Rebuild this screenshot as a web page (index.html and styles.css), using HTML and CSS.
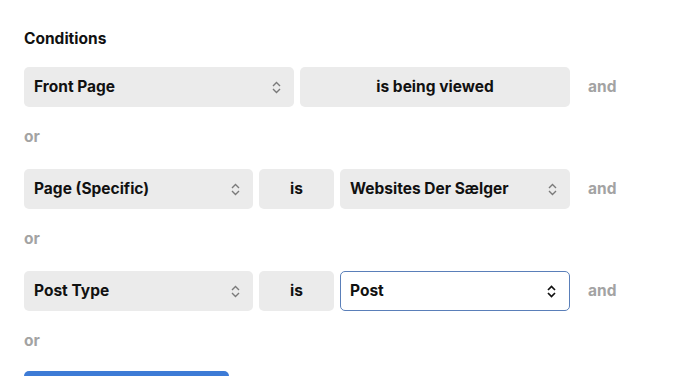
FILE: index.html
```html
<!DOCTYPE html>
<html>
  <head>
    <meta charset="UTF-8" />
    <title>Conditions</title>
    <link rel="stylesheet" href="styles.css">
  </head>
  <body>
    <div class="panel">
      <h3 class="heading">Conditions</h3>

      <div class="rule">
        <div class="fields">
          <div class="field select w-half">
            <span>Front Page</span>
            <svg class="chev" width="9" height="13" viewBox="0 0 9 13"><path d="M1 5 L4.5 1.5 L8 5 M1 8 L4.5 11.5 L8 8" /></svg>
          </div>
          <div class="field static w-half">is being viewed</div>
        </div>
        <span class="join">and</span>
      </div>
      <div class="or">or</div>

      <div class="rule">
        <div class="fields">
          <div class="field select w-left">
            <span>Page (Specific)</span>
            <svg class="chev" width="9" height="13" viewBox="0 0 9 13"><path d="M1 5 L4.5 1.5 L8 5 M1 8 L4.5 11.5 L8 8" /></svg>
          </div>
          <div class="field static w-op">is</div>
          <div class="field select w-right">
            <span>Websites Der Sælger</span>
            <svg class="chev" width="9" height="13" viewBox="0 0 9 13"><path d="M1 5 L4.5 1.5 L8 5 M1 8 L4.5 11.5 L8 8" /></svg>
          </div>
        </div>
        <span class="join">and</span>
      </div>
      <div class="or">or</div>

      <div class="rule">
        <div class="fields">
          <div class="field select w-left">
            <span>Post Type</span>
            <svg class="chev" width="9" height="13" viewBox="0 0 9 13"><path d="M1 5 L4.5 1.5 L8 5 M1 8 L4.5 11.5 L8 8" /></svg>
          </div>
          <div class="field static w-op">is</div>
          <div class="field select w-right active">
            <span>Post</span>
            <svg class="chev" width="9" height="13" viewBox="0 0 9 13"><path d="M1 5 L4.5 1.5 L8 5 M1 8 L4.5 11.5 L8 8" /></svg>
          </div>
        </div>
        <span class="join">and</span>
      </div>
      <div class="or">or</div>

      <!-- only the top edge of this button is in view -->
      <button class="add-btn" aria-label="Add rule group"></button>
    </div>
  </body>
</html>
```

FILE: styles.css
```css
body {
    margin: 0;
    background: #fff;
    font-family: Inter, "Liberation Sans", sans-serif;
    color: #111;
    overflow: hidden;
}
.panel { padding: 29px 24px 0 24px; }
.heading {
    margin: 0 0 18px 0;
    font-size: 15.5px;
    line-height: 20px;
    font-weight: 700;
}
.rule {
    display: flex;
    align-items: center;
}
.fields {
    display: flex;
    gap: 6px;
    width: 546px;
}
.field {
    height: 40px;
    box-sizing: border-box;
    border-radius: 5px;
    background: #ebebeb;
    display: flex;
    align-items: center;
    padding-bottom: 2px;
    font-size: 15.5px;
    font-weight: 700;
    color: #111;
}
.select {
    justify-content: space-between;
    padding: 0 13px 2px 10px;
}
.select .chev { margin-top: 2px; }
.static { justify-content: center; }
.w-half { width: 270px; }
.w-left { width: 229px; }
.w-op { width: 75px; }
.w-right { width: 230px; }
.chev { fill: none; stroke: #7a7a7a; stroke-width: 1.4; }
/* focused select */
.active {
    background: #fff;
    border: 1.5px solid #5a7fb9;
    padding-left: 9px;
}
.active .chev { stroke: #111; stroke-width: 1.7; }
.join {
    margin-left: 18px;
    padding-bottom: 2px;
    font-size: 15.5px;
    font-weight: 700;
    color: #a3a3a3;
}
.or {
    padding: 20px 0 22px 0;
    line-height: 20px;
    font-size: 15.5px;
    font-weight: 700;
    color: #a3a3a3;
}
.add-btn {
    display: block;
    width: 205px;
    height: 40px;
    margin-top: -2px;
    border: 0;
    border-radius: 5px;
    background: #3d7bd6;
}
```
